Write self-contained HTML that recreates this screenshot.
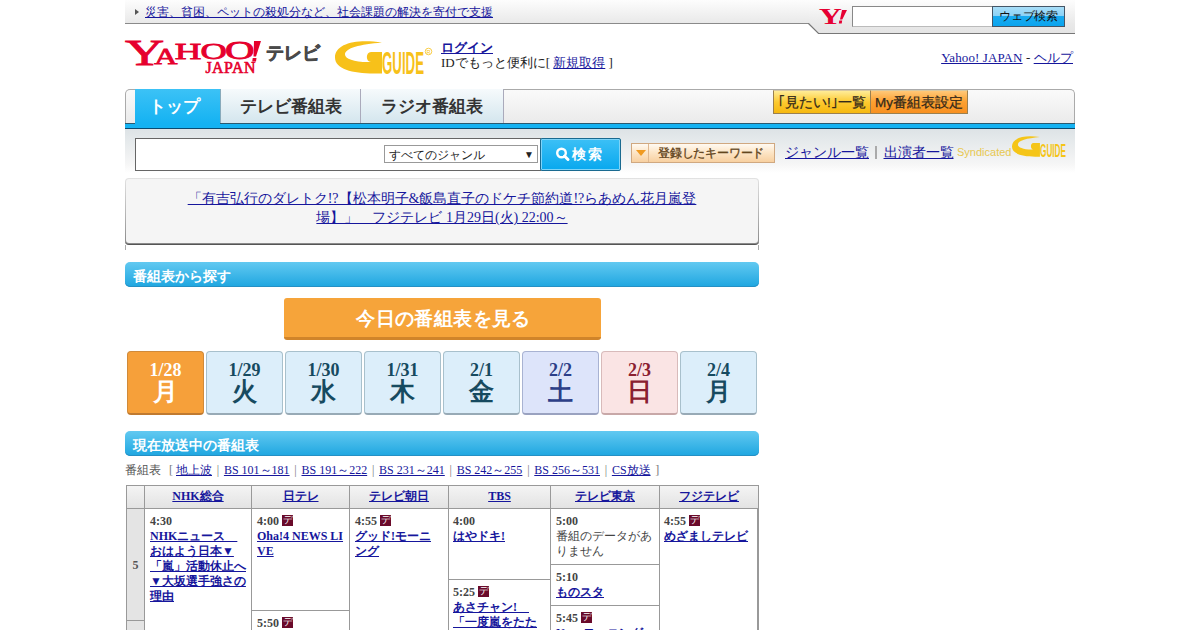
<!DOCTYPE html>
<html lang="ja"><head><meta charset="utf-8">
<style>
*{box-sizing:border-box}
html,body{margin:0;padding:0;width:1200px;height:630px;overflow:hidden;background:#fff}
body{font-family:"Liberation Serif",serif;font-size:12px;color:#333;position:relative}
a{color:#16169c;text-decoration:underline}
.abs{position:absolute}
#topbar{left:125px;top:0;width:685px;height:24px;background:linear-gradient(#fdfdfd,#e9e9e9);border-bottom:1px solid #8a8a8a}
#topbar .arr{left:10px;top:9px;width:0;height:0;border-left:4px solid #555;border-top:3px solid transparent;border-bottom:3px solid transparent}
#topbar a{position:absolute;left:20px;top:5px;font-size:12px;line-height:15px;white-space:nowrap}
#yinput{left:852px;top:6px;width:141px;height:21px;background:#fff;border:1px solid #888;border-right:none;border-bottom-color:#bbb}
#ybtn{left:992px;top:6px;width:73px;height:21px;border:1px solid #456;background:linear-gradient(#a8def8 0,#8cd2f6 45%,#18aaf0 50%,#0aa4ee 100%);font-family:"Liberation Sans",sans-serif;font-size:11.5px;color:#111;text-align:center;line-height:19px;letter-spacing:-0.3px}
#telebi{left:266px;top:41.5px;font-family:"Liberation Sans",sans-serif;font-size:18px;color:#4a4a4a;font-weight:bold;line-height:22px;-webkit-text-stroke:0.7px #4a4a4a}
#login{left:441px;top:40px;font-size:13px;line-height:15px;color:#222;white-space:nowrap}
#login .b{font-weight:bold}
#help{right:127px;top:50px;font-size:13px;line-height:15px;color:#222;white-space:nowrap;letter-spacing:0.1px}
#nav{left:125px;top:89px;width:950px;height:40px;border:1px solid #aaa;border-bottom:none;border-radius:5px 5px 0 0;background:linear-gradient(#fafafa,#e8e8e8)}
#bluebar{left:125px;top:123px;width:950px;height:6px;background:#14b2f2;border-top:1px solid #2a5a70;border-bottom:1px solid #0a4a70}
.tab{position:absolute;top:89px;height:35px;font-family:"Liberation Sans",sans-serif;font-size:16.5px;font-weight:bold;text-align:center;line-height:34px;color:#383838}
#t1{left:135px;width:85px;background:linear-gradient(#3cc2f6,#14b2f2);color:#fff !important;text-indent:-6px}
#t2{left:220px;width:141px;height:34px;background:linear-gradient(#f6fafc,#d4e6ee);color:#333;border-left:1px solid #8ab;border-right:1px solid #aab}
#t3{left:361px;width:143px;height:34px;background:linear-gradient(#f6fafc,#d4e6ee);color:#333;border-right:1px solid #aab}
.nbtn{position:absolute;top:90px;height:24px;font-family:"Liberation Sans",sans-serif;font-size:13.5px;text-align:center;line-height:23px;color:#33291a;border:1px solid #9a8050;border-top-color:#d8c8a0;white-space:nowrap;-webkit-text-stroke:0.25px #33291a}
#nb1{left:773px;width:98px;background:linear-gradient(#ffec98,#fcca30 50%,#f6b810)}
#nb2{left:870px;width:98px;background:linear-gradient(#ffc878,#fca030 50%,#f89020)}
#srow{left:125px;top:129px;width:950px;height:44px;background:linear-gradient(#dde3e6,#f6f6f6 80%,#fff)}
#sinput{left:135px;top:138px;width:406px;height:33px;background:#fff;border:1px solid #666;border-right:none}
#sel{left:384px;top:145px;width:154px;height:18px;border:1px solid #999;background:#fff;font-family:"Liberation Sans",sans-serif;font-size:12px;line-height:19px;color:#222;padding-left:4px}
#sel span{position:absolute;right:3px;top:-1px;font-size:10px}
#sbtn{left:540px;top:138px;width:81px;height:33px;border:1px solid #1a6a90;border-radius:2px;background:linear-gradient(#3cc0f6,#08a8ee);box-shadow:inset 0 0 0 1px #7fd4f8}
#sbtn .t{position:absolute;left:31px;top:7px;color:#fff;font-family:"Liberation Sans",sans-serif;font-weight:bold;font-size:14px;line-height:16px;letter-spacing:2px}
#kbtn{left:631px;top:143px;width:144px;height:20px;border:1px solid #d0a880;background:linear-gradient(#fffaf2,#fde6c8 45%,#f8d0a0);font-family:"Liberation Sans",sans-serif;font-size:12px;color:#64461e;line-height:19px;white-space:nowrap;letter-spacing:-0.2px;-webkit-text-stroke:0.35px #64461e}
#kbtn .k1{position:absolute;left:0;top:0;width:17px;height:18px;border-right:1px solid #e0b890}
#kbtn .k1:after{content:"";position:absolute;left:4px;top:6px;border-top:6px solid #f09a20;border-left:5px solid transparent;border-right:5px solid transparent}
#kbtn .kt{position:absolute;left:26px;top:0}
#glinks{left:785px;top:143px;font-family:"Liberation Sans",sans-serif;font-size:14px;line-height:18px;color:#999;white-space:nowrap}
#glinks .gs{display:inline-block;width:2px;height:13px;background:#aaa;margin:0 6.5px 0 6px;vertical-align:-2px}
#synd{left:957px;top:146px;font-family:"Liberation Sans",sans-serif;font-size:11px;color:#e8c850;line-height:13px}
#promo{left:125px;top:178px;width:634px;height:67px;background:linear-gradient(#e2e2e2,#b0b0b0 60%,#8a8a8a);border-radius:4px;text-align:center;font-size:14px;line-height:19px;padding-top:11px}
#promo:before{content:"";position:absolute;left:1px;top:1px;right:1px;bottom:1px;background:#f5f5f5;border-radius:3px;z-index:-1}
#promo{z-index:0;border-bottom:1px solid #555}
.tick{position:absolute;width:1px;height:5px;top:245px;background:#aaa}
.hdr{position:absolute;left:125px;width:634px;height:25px;border-radius:5px;background:linear-gradient(#62c9f1,#1ea6e0);box-shadow:inset 0 -1px 0 #2590c4;color:#fff;font-family:"Liberation Sans",sans-serif;font-size:14px;font-weight:bold;line-height:28px;padding-left:8px}
#obtn{left:284px;top:298px;width:317px;height:42px;background:#f6a43a;border-bottom:3px solid #d0842a;border-radius:3px;color:#fff;font-family:"Liberation Sans",sans-serif;font-size:19px;font-weight:bold;text-align:center;line-height:42px;letter-spacing:0.4px;text-indent:2px}
.day{position:absolute;top:351px;width:77px;height:64px;border-radius:4px;border:1px solid #a8c0cc;border-bottom:2px solid #98aab6;background:#dceefa;color:#164a60;text-align:center;font-weight:bold}
.day .d{position:absolute;left:0;right:0;top:8px;font-size:18px;line-height:20px}
.day .w{position:absolute;left:0;right:0;top:25px;font-family:"Liberation Sans",sans-serif;font-size:25px;line-height:29px}
.day.today{background:#f6a03a;border-color:#d08a3a;border-bottom-color:#c07a30;color:#fff}
.day.sat{background:#dde4fa;border-color:#a8b2d2;border-bottom-color:#9aa2c0;color:#2c3e88}
.day.sun{background:#fae4e4;border-color:#d8baba;border-bottom-color:#c8a8a8;color:#8a2030}
#chlinks{left:125px;top:463px;font-size:12px;line-height:15px;color:#999;white-space:nowrap}
#chlinks .s{font-weight:normal;margin:0 4.75px;color:#777}
#chlinks .s:first-of-type{margin:0 3px 0 5px}
#chlinks .g{color:#555;font-family:"Liberation Sans",sans-serif}
#tbl{left:126px;top:485px;width:633px;height:160px;border:1px solid #999;border-right:2px solid #999;background:#fff}
.c{position:absolute;border-left:1px solid #999;border-top:1px solid #999;padding:5px 0 0 5px;font-size:12px;line-height:15px;color:#444;white-space:nowrap}
.th{position:absolute;top:486px;height:23px;border-left:1px solid #999;background:linear-gradient(#f4f4f4,#e2e2e2);text-align:center;font-weight:bold;font-size:12px;line-height:21px}
.tm{font-weight:bold;color:#444}
.tm i{display:inline-block;width:11px;height:11px;background:#6a0a2a;vertical-align:-1px;margin-left:3px;position:relative}
.tm i:after{content:"デ";position:absolute;left:0;top:-2px;width:11px;text-align:center;color:#fff;font-size:10px;line-height:13px;font-style:normal;font-weight:normal;font-family:"Liberation Sans",sans-serif}
.c a{font-weight:bold}
</style></head><body>

<div id="topbar" class="abs"><div class="arr abs"></div><a>災害、貧困、ペットの殺処分など、社会課題の解決を寄付で支援</a></div>

<svg class="abs" style="left:800px;top:0" width="280" height="40">
<defs><linearGradient id="ysg" gradientUnits="userSpaceOnUse" x1="0" y1="0" x2="0" y2="34"><stop offset="0" stop-color="#fdfdfd"/><stop offset="0.7" stop-color="#e9e9e9"/><stop offset="1" stop-color="#e4e4e4"/></linearGradient></defs>
<path d="M9 23.5 L18.5 33.5 H275 V0 H9 Z" fill="url(#ysg)"/>
<path d="M8.5 23.5 L18.5 33.5 H275" fill="none" stroke="#777" stroke-width="1.2"/>
<g fill="#e60033" font-family="Liberation Serif" font-weight="bold">
<text transform="translate(18.7,24) scale(1.44,1)" font-size="22.3">Y</text>
<path d="M42 10 H47 L42.3 19.5 H40 Z M39.3 20.5 H42.2 L41.7 23.5 H38.8 Z"/>
</g>
</svg>
<div id="yinput" class="abs"></div>
<div id="ybtn" class="abs">ウェブ検索</div>

<svg class="abs" style="left:120px;top:35px" width="145" height="45">
<g fill="#e6002d" stroke="#e6002d" stroke-width="0.8" font-family="Liberation Serif">
<text transform="translate(5,29.9) scale(1.51,1)" font-size="35.9">Y</text>
<text transform="translate(34.24,28.9) scale(1.394,1)" font-size="23">A</text>
<text transform="translate(54.84,24.2) scale(1.53,1)" font-size="24.1">H</text>
<text transform="translate(80.56,24.38) scale(1.632,1)" font-size="22.3">O</text>
<text transform="translate(104.98,23.85) scale(1.631,1)" font-size="25">O</text>
<path stroke="none" d="M134 6 H141 L136 21.5 H133.5 Z M132.7 23 H136.5 L136 26.5 H132.2 Z"/>
<text x="85.4" y="38.3" font-size="15.9" stroke-width="0.6" textLength="50" lengthAdjust="spacing">JAPAN</text>
</g>
</svg>
<div id="telebi" class="abs">テレビ</div>

<svg class="abs" style="left:330px;top:36px" width="105" height="42">
<g fill="#f7c11a">
<path d="M52 6.5 C26 2.5 5 7.5 5 21.5 C5 33 22 37.5 44 37.5 L52 37.5 L52 16 L41 16 C35.5 16 35.5 26 41 26 C25 26.5 15 23 15 18.5 C15 12 30 8.5 52 6.5 Z"/>
<text x="52" y="38" font-family="Liberation Sans" font-weight="bold" font-size="31.5" textLength="42" lengthAdjust="spacingAndGlyphs">GUIDE</text>
</g>
<circle cx="98.5" cy="15.5" r="3.3" fill="none" stroke="#f7c11a" stroke-width="0.8"/><text x="96.6" y="17.6" font-family="Liberation Sans" font-size="5.5" fill="#f7c11a">R</text>
</svg>

<div id="login" class="abs"><a class="b">ログイン</a><br>IDでもっと便利に[ <a>新規取得</a> ]</div>
<div id="help" class="abs"><a>Yahoo! JAPAN</a> - <a>ヘルプ</a></div>

<div id="nav" class="abs"></div>
<div id="bluebar" class="abs"></div>
<div class="tab" id="t1">トップ</div>
<div class="tab" id="t2">テレビ番組表</div>
<div class="tab" id="t3">ラジオ番組表</div>
<div class="nbtn" id="nb1">｢見たい!｣一覧</div>
<div class="nbtn" id="nb2">My番組表設定</div>

<div id="srow" class="abs"></div>
<div id="sinput" class="abs"></div>
<div id="sel" class="abs">すべてのジャンル<span>▼</span></div>
<div id="sbtn" class="abs"><svg class="abs" style="left:14px;top:7px" width="16" height="16"><circle cx="6.5" cy="7" r="4.3" fill="none" stroke="#fff" stroke-width="2.4"/><path d="M9.5 10 L13 13.5" stroke="#fff" stroke-width="3" stroke-linecap="round"/></svg><div class="t">検索</div></div>
<div id="kbtn" class="abs"><div class="k1"></div><div class="kt">登録したキーワード</div></div>
<div id="glinks" class="abs"><a>ジャンル一覧</a><span class="gs"></span><a>出演者一覧</a></div>
<div id="synd" class="abs">Syndicated</div>
<svg class="abs" style="left:1009px;top:133px" width="66" height="30">
<g fill="#f5c518" transform="scale(0.595,0.63)">
<path d="M52 6.5 C26 2.5 5 7.5 5 21.5 C5 33 22 37.5 44 37.5 L52 37.5 L52 16 L41 16 C35.5 16 35.5 26 41 26 C25 26.5 15 23 15 18.5 C15 12 30 8.5 52 6.5 Z"/>
</g>
<text x="31" y="24" fill="#f5c518" font-family="Liberation Sans" font-weight="bold" font-size="18.6" textLength="26" lengthAdjust="spacingAndGlyphs">GUIDE</text>
</svg>

<div id="promo" class="abs"><a>「有吉弘行のダレトク!?【松本明子&amp;飯島直子のドケチ節約道!?らあめん花月嵐登<br>場】」　フジテレビ 1月29日(火) 22:00～</a></div>

<div class="tick" style="left:125px"></div><div class="tick" style="left:758px"></div>
<div class="hdr" style="top:262px">番組表から探す</div>
<div id="obtn" class="abs">今日の番組表を見る</div>

<div class="day today" style="left:127px"><div class="d">1/28</div><div class="w">月</div></div>
<div class="day" style="left:206px"><div class="d">1/29</div><div class="w">火</div></div>
<div class="day" style="left:285px"><div class="d">1/30</div><div class="w">水</div></div>
<div class="day" style="left:364px"><div class="d">1/31</div><div class="w">木</div></div>
<div class="day" style="left:443px"><div class="d">2/1</div><div class="w">金</div></div>
<div class="day sat" style="left:522px"><div class="d">2/2</div><div class="w">土</div></div>
<div class="day sun" style="left:601px"><div class="d">2/3</div><div class="w">日</div></div>
<div class="day" style="left:680px"><div class="d">2/4</div><div class="w">月</div></div>

<div class="hdr" style="top:431px">現在放送中の番組表</div>
<div id="chlinks" class="abs"><span class="g">番組表</span> <b class="s">[</b><a>地上波</a><b class="s">|</b><a>BS 101～181</a><b class="s">|</b><a>BS 191～222</a><b class="s">|</b><a>BS 231～241</a><b class="s">|</b><a>BS 242～255</a><b class="s">|</b><a>BS 256～531</a><b class="s">|</b><a>CS放送</a><b class="s">]</b></div>

<div id="tbl" class="abs"></div>
<div class="th" style="left:127px;width:17px;border-left:none"></div>
<div class="th" style="left:144px;width:107px"><a>NHK総合</a></div>
<div class="th" style="left:251px;width:98px"><a>日テレ</a></div>
<div class="th" style="left:349px;width:99px"><a>テレビ朝日</a></div>
<div class="th" style="left:448px;width:102px"><a>TBS</a></div>
<div class="th" style="left:550px;width:109px"><a>テレビ東京</a></div>
<div class="th" style="left:659px;width:99px"><a>フジテレビ</a></div>

<div class="c" style="left:127px;top:508px;width:17px;height:113px;border-left:none;background:#e4e4e4;padding:0;text-align:center;line-height:112px;font-weight:bold;color:#555">5</div>
<div class="c" style="left:127px;top:620px;width:17px;height:20px;border-left:none;background:#e4e4e4;padding:0"></div>
<div class="c" style="left:144px;top:508px;width:107px;height:130px"><span class="tm">4:30</span><br><a>NHKニュース　<br>おはよう日本▼<br>「嵐」活動休止へ<br>▼大坂選手強さの<br>理由</a></div>
<div class="c" style="left:251px;top:508px;width:98px;height:103px"><span class="tm">4:00<i></i></span><br><a>Oha!4 NEWS LI<br>VE</a></div>
<div class="c" style="left:251px;top:610px;width:98px;height:30px"><span class="tm">5:50<i></i></span></div>
<div class="c" style="left:349px;top:508px;width:99px;height:130px"><span class="tm">4:55<i></i></span><br><a>グッド!モーニ<br>ング</a></div>
<div class="c" style="left:448px;top:508px;width:102px;height:72px;padding-left:4px"><span class="tm">4:00</span><br><a>はやドキ!</a></div>
<div class="c" style="left:448px;top:579px;width:102px;height:60px;padding-left:4px"><span class="tm">5:25<i></i></span><br><a>あさチャン!　<br>「一度嵐をたた</a></div>
<div class="c" style="left:550px;top:508px;width:109px;height:57px"><span class="tm">5:00</span><br><span style="font-family:'Liberation Sans'">番組のデータがあ<br>りません</span></div>
<div class="c" style="left:550px;top:564px;width:109px;height:42px"><span class="tm">5:10</span><br><a>ものスタ</a></div>
<div class="c" style="left:550px;top:605px;width:109px;height:40px"><span class="tm">5:45<i></i></span><br><a>Newsモーニング</a></div>
<div class="c" style="left:659px;top:508px;width:99px;height:130px;padding-left:4px"><span class="tm">4:55<i></i></span><br><a>めざましテレビ</a></div>

</body></html>
